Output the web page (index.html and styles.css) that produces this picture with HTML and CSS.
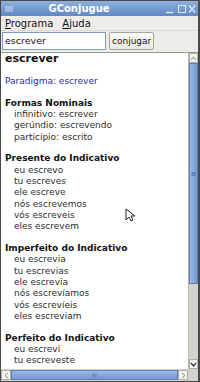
FILE: index.html
```html
<!DOCTYPE html>
<html lang="pt">
<head>
  <meta charset="UTF-8" />
  <title>GConjugue</title>
  <link rel="stylesheet" href="styles.css">
</head>
<body>
  <div class="janela">

    <!-- Barra de titulo -->
    <div class="titulo">
      <span class="titulo-menu">
        <svg viewBox="0 0 8 6" width="8" height="6"><path d="M0 1h8M0 3h8M0 5h8" stroke="#c9d8ee" stroke-width="1"/></svg>
      </span>
      <span class="titulo-texto">GConjugue</span>
      <span class="titulo-botoes">
        <svg viewBox="0 0 32 10" width="32" height="10">
          <path d="M1 8.5h7" stroke="#dfe8f5" stroke-width="1.4"/>
          <rect x="13.5" y="1.5" width="7" height="7" fill="none" stroke="#dfe8f5" stroke-width="1"/>
          <path d="M24 1.5l6 7M30 1.5l-6 7" stroke="#dfe8f5" stroke-width="1.3"/>
        </svg>
      </span>
    </div>

    <!-- Menu -->
    <div class="menu">
      <span><u>P</u>rograma</span>
      <span><u>A</u>juda</span>
    </div>

    <!-- Entrada -->
    <div class="barra">
      <div class="entrada">escrever</div>
      <div class="botao">conjugar</div>
    </div>

    <!-- Resultado -->
    <div class="area">
      <div class="texto">
        <div class="verbo">escrever</div>
        <div class="paradigma">Paradigma: escrever</div>

        <div class="grupo">
          <div class="tempo">Formas Nominais</div>
          <div class="forma">infinitivo: escrever</div>
          <div class="forma">gerúndio: escrevendo</div>
          <div class="forma">particípio: escrito</div>
        </div>

        <div class="grupo">
          <div class="tempo">Presente do Indicativo</div>
          <div class="forma">eu escrevo</div>
          <div class="forma">tu escreves</div>
          <div class="forma">ele escreve</div>
          <div class="forma">nós escrevemos</div>
          <div class="forma">vós escreveis</div>
          <div class="forma">eles escrevem</div>
        </div>

        <div class="grupo">
          <div class="tempo">Imperfeito do Indicativo</div>
          <div class="forma">eu escrevia</div>
          <div class="forma">tu escrevias</div>
          <div class="forma">ele escrevia</div>
          <div class="forma">nós escrevíamos</div>
          <div class="forma">vós escrevíeis</div>
          <div class="forma">eles escreviam</div>
        </div>

        <div class="grupo">
          <div class="tempo">Perfeito do Indicativo</div>
          <div class="forma">eu escrevi</div>
          <div class="forma">tu escreveste</div>
        </div>

        <svg class="cursor" viewBox="0 0 10 14" width="10" height="14">
          <path d="M1 1v11l3-3 2 4 2-1-2-4h4z" fill="#fff" stroke="#222" stroke-width="1"/>
        </svg>
      </div>

      <div class="rolagem-v">
        <div class="seta">
          <svg viewBox="0 0 7 7" width="7" height="7"><path d="M1 5l2.5-3 2.5 3" fill="none" stroke="#888" stroke-width="1"/></svg>
        </div>
        <div class="trilho-v">
          <div class="polegar-v"><span class="riscos">≡</span></div>
        </div>
        <div class="seta">
          <svg viewBox="0 0 7 7" width="7" height="7"><path d="M1 2l2.5 3 2.5-3" fill="none" stroke="#333" stroke-width="1.2"/></svg>
        </div>
      </div>

      <div class="rolagem-h">
        <div class="seta">
          <svg viewBox="0 0 7 7" width="7" height="7"><path d="M5 1l-3 2.5 3 2.5" fill="none" stroke="#888" stroke-width="1"/></svg>
        </div>
        <div class="polegar-h"><span class="riscos">III</span></div>
        <div class="seta">
          <svg viewBox="0 0 7 7" width="7" height="7"><path d="M2 1l3 2.5-3 2.5" fill="none" stroke="#888" stroke-width="1"/></svg>
        </div>
      </div>
      <div class="canto"></div>
    </div>

  </div>
</body>
</html>
```

FILE: styles.css
```css
* {
  box-sizing: border-box;
}

body, html {
  margin: 0;
  padding: 0;
  width: 200px;
  height: 382px;
  overflow: hidden;
  font-family: 'DejaVu Sans', sans-serif;
  background: #3c3c3c;
}

.janela {
  width: 200px;
  height: 382px;
  display: flex;
  flex-direction: column;
  background: #edece9;
  border: 1px solid #4a4a4a;
  border-right-width: 2px;
}

.titulo {
  height: 15px;
  flex: none;
  display: flex;
  align-items: center;
  padding: 0 1px 0 4px;
  background: linear-gradient(#8fb0de, #5f88c6);
  color: #fff;
}

.titulo-menu {
  width: 14px;
  display: flex;
}

.titulo-texto {
  flex: 1;
  text-align: center;
  font-weight: bold;
  font-size: 10px;
  padding-right: 26px;
}

.titulo-botoes {
  display: flex;
}

.menu {
  height: 15px;
  flex: none;
  display: flex;
  align-items: center;
  gap: 9px;
  padding: 0 4px;
  font-size: 10px;
  color: #111;
  border-bottom: 1px solid #dcdad5;
}

.barra {
  height: 20px;
  flex: none;
  display: flex;
  align-items: center;
  gap: 3px;
  padding: 0 1px;
  margin-bottom: 1px;
}

.entrada {
  width: 104px;
  height: 18px;
  background: #fff;
  border: 1px solid #7b9cc8;
  font-size: 9.5px;
  line-height: 16px;
  padding: 0 2px;
  color: #111;
}

.botao {
  height: 18px;
  padding: 0 2px;
  font-size: 9px;
  line-height: 16px;
  color: #111;
  border: 1px solid #a6a39c;
  border-radius: 2px;
  background: linear-gradient(#fbfbfa, #e9e8e4);
}

.area {
  flex: 1;
  display: grid;
  grid-template-columns: 1fr 10px;
  grid-template-rows: 1fr 12px;
  border-top: 1px solid #9a9893;
  min-height: 0;
}

.texto {
  position: relative;
  background: #fff;
  overflow: hidden;
  padding: 0 0 0 4px;
  font-size: 9px;
  line-height: 11.3px;
  color: #2e2e2e;
}

.verbo {
  font-weight: bold;
  font-size: 11px;
  line-height: 12px;
  color: #111;
}

.paradigma {
  margin-top: 11px;
  color: #2727c0;
}

.grupo {
  margin-top: 10.5px;
}

.tempo {
  font-weight: bold;
  color: #111;
}

.forma {
  padding-left: 9px;
}

.cursor {
  position: absolute;
  top: 155px;
  left: 124px;
}

.rolagem-v {
  display: flex;
  flex-direction: column;
  background: #d4d2cd;
  border-left: 1px solid #b7b4ad;
}

.seta {
  height: 10px;
  flex: none;
  display: flex;
  align-items: center;
  justify-content: center;
  background: #f4f3f1;
  border: 1px solid #b1aea8;
}

.trilho-v {
  flex: 1;
  display: flex;
  flex-direction: column;
  padding-bottom: 75px;
}

.polegar-v {
  flex: 1;
  background: linear-gradient(90deg, #9cbbe4, #7298d0);
  border: 1px solid #5b7fb6;
  display: flex;
  align-items: center;
  justify-content: center;
  color: #3d5e94;
  font-size: 7px;
}

.rolagem-h {
  display: flex;
  background: #d4d2cd;
  padding: 1px 0;
}

.rolagem-h .seta {
  width: 10px;
  height: 10px;
}

.polegar-h {
  flex: 1;
  background: linear-gradient(#9cbbe4, #7298d0);
  border: 1px solid #5b7fb6;
  display: flex;
  align-items: center;
  justify-content: center;
  color: #3d5e94;
  font-size: 5px;
}

.canto {
  background: #d4d2cd;
}
```
